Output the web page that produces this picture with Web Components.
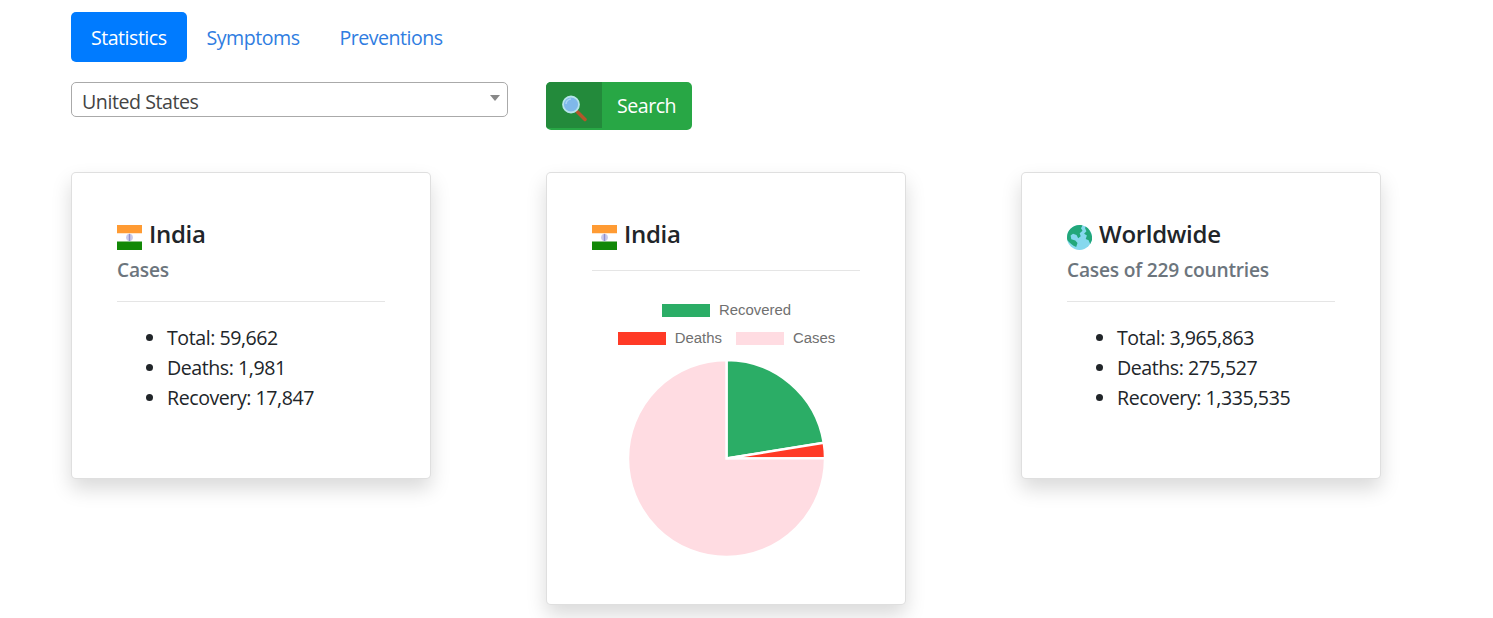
<!DOCTYPE html>
<html lang="en"><head><meta charset="utf-8"><title>Covid</title>
<style>
html,body{margin:0;padding:0;background:#fff}
body{font:19.6px/30px "Open Sans","Noto Sans",sans-serif;color:#212529}
</style></head><body>
<covid-app>
  <nav-pills slot="nav">
    <pill-tab active>Statistics</pill-tab>
    <pill-tab>Symptoms</pill-tab>
    <pill-tab>Preventions</pill-tab>
  </nav-pills>
  <country-select slot="select">United States</country-select>
  <search-button slot="button">Search</search-button>
  <info-card>
    <flag-india slot="icon"></flag-india>
    <span slot="title">India</span>
    <span slot="subtitle">Cases</span>
    <stat-row>Total: 59,662</stat-row>
    <stat-row>Deaths: 1,981</stat-row>
    <stat-row>Recovery: 17,847</stat-row>
  </info-card>
  <info-card chart>
    <flag-india slot="icon"></flag-india>
    <span slot="title">India</span>
    <pie-chart></pie-chart>
  </info-card>
  <info-card>
    <globe-icon slot="icon"></globe-icon>
    <span slot="title">Worldwide</span>
    <span slot="subtitle">Cases of 229 countries</span>
    <stat-row>Total: 3,965,863</stat-row>
    <stat-row>Deaths: 275,527</stat-row>
    <stat-row>Recovery: 1,335,535</stat-row>
  </info-card>
</covid-app>
<script>
function def(name, html, extra){
  customElements.define(name, class extends HTMLElement{
    constructor(){super();this.attachShadow({mode:'open'}).innerHTML=html;}
    connectedCallback(){ if(extra) extra(this); }
  });
}
const FONT_TRACK='-0.45px';
def('covid-app',`<style>
:host{display:block;box-sizing:border-box;height:618px;padding:12px 0 0 71px}
.row{display:grid;grid-template-columns:437px auto;column-gap:38px;justify-content:start;align-items:start;margin:20px 0 42px}
.cards{display:grid;grid-template-columns:repeat(3,360px);column-gap:115px;align-items:start;justify-content:start}
</style>
<slot name="nav"></slot>
<div class="row"><slot name="select"></slot><slot name="button"></slot></div>
<div class="cards"><slot></slot></div>`);
def('nav-pills',`<style>:host{display:flex;height:50px}</style><slot></slot>`);
def('pill-tab',`<style>
:host{display:block;padding:11px 20px 9px;line-height:30px;border-radius:5px;color:#2f7de1;letter-spacing:-0.5px;white-space:nowrap}
:host([active]){background:#007bff;color:#fff}
</style><slot></slot>`);
def('country-select',`<style>
:host{display:flex;align-items:center;justify-content:space-between;box-sizing:border-box;height:35px;border:1px solid #aaa;border-radius:5px;padding:0 7px 0 10px;color:#444;line-height:30px;letter-spacing:${FONT_TRACK};background:#fff}
span{padding-top:4px}
i{width:0;height:0;border:5px solid transparent;border-top:6px solid #888;border-bottom:0;margin-top:-4px}
</style><span><slot></slot></span><i></i>`);
def('search-button',`<style>
:host{display:inline-flex;height:48px;width:146px;box-sizing:border-box;background:#28a745;border-radius:5px;color:#fff;overflow:hidden;letter-spacing:-0.5px}
.ic{width:56px;height:46px;background:#238a3b;display:flex;align-items:center;justify-content:center}
.t{padding-left:15px;line-height:48px}
svg{width:28px;height:28px;margin-top:8px;margin-left:-3px}
</style>
<span class="ic"><svg viewBox="0 0 28 28">
<path d="M18 16.500l8 8" stroke="#b3562b" stroke-width="3.500" stroke-linecap="round"/>
<circle cx="12" cy="9.500" r="8" fill="#7fb8ea" stroke="#b5e4ea" stroke-width="1.800"/>
<path d="M7 9a5 5 0 0 1 5-5" stroke="#a9d5f5" stroke-width="1.500" fill="none"/>
</svg></span><span class="t"><slot></slot></span>`);
def('info-card',`<style>
:host{display:block;box-sizing:border-box;width:360px;padding:46px 45px 45px;background:#fff;border:1px solid rgba(0,0,0,.125);border-radius:5px;box-shadow:0 10px 20px rgba(0,0,0,.15)}
.title{display:flex;align-items:center;height:30px;font-size:24px;line-height:30px;font-weight:600;letter-spacing:-.3px;color:#212529;gap:7px}
.sub{display:block;margin-top:9px;font-size:19.2px;line-height:24px;font-weight:600;color:#6c757d;letter-spacing:-.22px}
hr{border:0;border-top:1px solid rgba(0,0,0,.1);margin:19px 0 21px}
:host([chart]) hr{margin:21px 0 0}
:host([chart]) .sub{display:none}
ul{margin:0 0 20px;padding:0 0 0 50px;list-style:disc}
:host([chart]) ul{padding:0;margin:0;list-style:none}
</style>
<div class="title"><slot name="icon"></slot><span><slot name="title"></slot></span></div>
<span class="sub"><slot name="subtitle"></slot></span>
<hr>
<ul><slot></slot></ul>`);
def('stat-row',`<style>:host{display:list-item;line-height:30px;letter-spacing:${FONT_TRACK}}</style><slot></slot>`);
def('flag-india',`<style>:host{display:block;width:25px;height:25px;margin-top:6px}svg{display:block}</style>
<svg width="25" height="25" viewBox="0 0 25 25">
<rect width="25" height="8.500" fill="#ff9b33"/><rect y="8.500" width="25" height="8" fill="#fff"/><rect y="16.500" width="25" height="8.500" fill="#128807"/>
<circle cx="12.500" cy="12.500" r="3.400" fill="#c9c9ea"/><path d="M12.500 8.800v7.400" stroke="#8f8fce" stroke-width="1.400"/></svg>`);
def('globe-icon',`<style>:host{display:block;width:25px;height:25px;margin-top:6px}svg{display:block}</style>
<svg width="25" height="25" viewBox="0 0 25 25">
<circle cx="12.500" cy="12.500" r="12.500" fill="#86d8ee"/>
<path d="M3.500 3.800C6 1.400 9 0 12.500 0c1 0 2 .1 3 .4L14 3.200l1.500 2.600-2.800 2.400 1 3-2.500 2L9.500 10 6 8.800 3.600 10.500l.7 3.700 4 1.200 2.200 2.700-1.300 3.800C5.500 20.500 2.500 18 .6 15.500 0 14.500 0 13.500 0 12.500 0 9 1.300 6 3.500 3.800Z" fill="#22a77a"/>
<path d="M18.500 1.600C22 3.700 24.400 7.300 25 11.500v3.500L23.200 19l-1.600-3.800-2.900-1.300 1.200-3.300-2.800-1.800 2.300-2.500-1.300-3Z" fill="#22a77a"/>
</svg>`);
def('pie-chart',`<style>
:host{display:block;width:268px;height:288px}
.legend{box-sizing:border-box;height:85px;padding:25px 0 0 1px;font:14.9px/28px "Liberation Sans",Arial,sans-serif;color:#707070}
.ln{display:flex;justify-content:center;height:28px;align-items:center}
.it{display:flex;align-items:center;gap:9px;margin:0 7px}
.it b{display:block;width:48px;height:13px}
svg{display:block;margin:0 auto}
</style>
<div class="legend">
<div class="ln"><span class="it"><b style="background:#2bad66"></b>Recovered</span></div>
<div class="ln"><span class="it"><b style="background:#ff3a26"></b>Deaths</span><span class="it"><b style="background:#ffdce2"></b>Cases</span></div>
</div>
<svg id="p" width="268" height="203" viewBox="0 0 268 203"></svg>`, el=>{
  const s=el.shadowRoot.getElementById('p');
  const vals=[[17847,'#2bad66'],[1981,'#ff3a26'],[59662,'#ffdce2']];
  const t=vals.reduce((a,v)=>a+v[0],0),cx=134.5,cy=102.5,r=98.5;let a=0,h='';
  for(const [v,c] of vals){
    const b=a+v/t*2*Math.PI,p=(x)=>(cx+r*Math.sin(x)).toFixed(2)+' '+(cy-r*Math.cos(x)).toFixed(2);
    h+=`<path d="M${cx} ${cy}L${p(a)}A${r} ${r} 0 ${b-a>Math.PI?1:0} 1 ${p(b)}Z" fill="${c}" stroke="#fff" stroke-width="2.4"/>`;
    a=b;
  }
  s.innerHTML=h;
});
</script>
</body></html>
